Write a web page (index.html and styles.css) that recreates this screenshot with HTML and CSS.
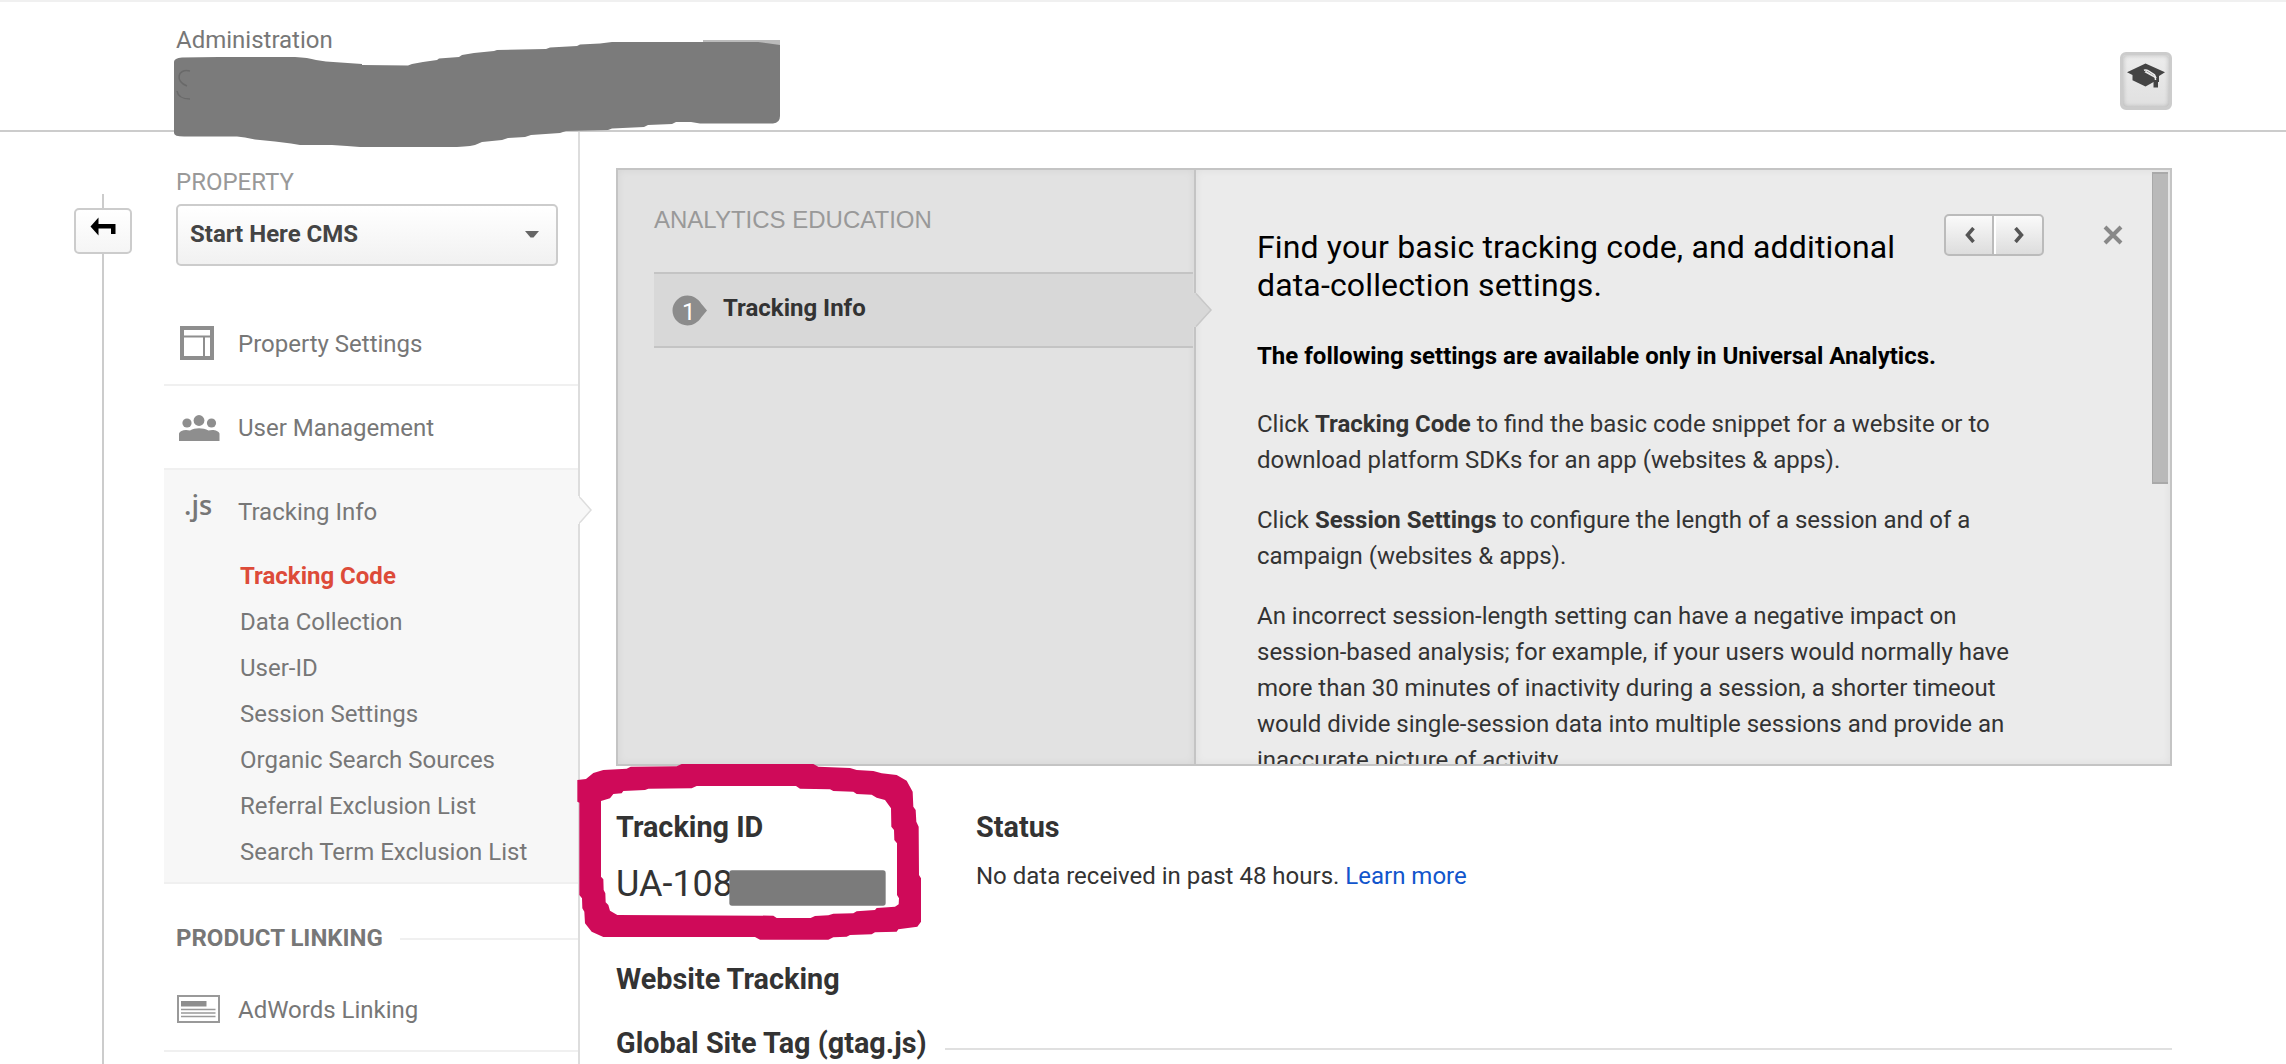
FILE: index.html
```html
<!DOCTYPE html>
<html lang="en">
<head>
<meta charset="utf-8">
<title>Administration</title>
<link rel="stylesheet" href="styles.css">
</head>
<body>
<header class="header">
  <div class="crumb">Administration</div>
  <button class="edu-button" aria-label="Education">
    <svg width="40" height="28" viewBox="0 0 40 28"><path d="M1 10.300 19.500 1.500 39 10.300 33 14V20H30.500V15L20 8.800l-1.500 1.500 10 5.500V19.500L19.500 24.500 6.500 18.200V13Z" fill="#444"/><path d="M27.500 16v9.500h4.500V16" fill="#444"/><path d="M18 8.300c1.700-.8 3-.3 4 .4l6.500 4.200c1 1 1 2 1 5" fill="none" stroke="#eee" stroke-width="1.500"/></svg>
  </button>
</header>

<div class="body">
  <div class="rail">
    <div class="rail-line rail-top"></div>
    <button class="back" aria-label="Back"><svg width="28" height="20" viewBox="0 0 28 20"><path d="M1.500 9.500 9.500 .5V7H26.500V17H22V11.500H9.500V18.500Z" fill="#000"/></svg></button>
    <div class="rail-line rail-rest"></div>
  </div>

  <nav class="sidebar">
    <div class="property">
      <div class="property-label">PROPERTY</div>
      <div class="select"><span>Start Here CMS</span><svg width="14" height="7" viewBox="0 0 14 7"><path d="M0 0H14L8.500 6.500H5.500Z" fill="#666"/></svg></div>
    </div>
    <a class="nav-item">
      <span class="nav-icon"><svg width="34" height="34" viewBox="0 0 34 34" fill="none" stroke="#8e8e8e"><rect x="2" y="2" width="30" height="30" stroke-width="4"/><path d="M3 10.500H31M24 11V31" stroke-width="2"/></svg></span>
      <span>Property Settings</span>
    </a>
    <a class="nav-item">
      <span class="nav-icon users"><svg width="41" height="26" viewBox="0 0 41 26" fill="#8e8e8e"><circle cx="20" cy="5.500" r="5.400"/><circle cx="8" cy="8" r="4.600"/><circle cx="32.500" cy="8" r="4.600"/><path d="M0 26V18.500C1 15.500 6 14 11 15.500 16 12.500 24 12.500 29.500 15.500 34 14 39.500 15.500 40.500 18.500V26Z"/></svg></span>
      <span>User Management</span>
    </a>
    <div class="group">
      <a class="nav-item flush">
        <span class="nav-icon js">.js</span>
        <span>Tracking Info</span>
      </a>
      <svg class="group-arrow" width="16" height="28" viewBox="0 0 16 28"><path d="M0 0H2V1.500L14 14 2 26.500V28H0Z" fill="#f7f7f7"/><path d="M3 1.500 14 14 3 26.500" fill="none" stroke="#ddd" stroke-width="1.500"/></svg>
      <ul class="subnav">
        <li class="active">Tracking Code</li>
        <li>Data Collection</li>
        <li>User-ID</li>
        <li>Session Settings</li>
        <li>Organic Search Sources</li>
        <li>Referral Exclusion List</li>
        <li>Search Term Exclusion List</li>
      </ul>
    </div>
    <div class="section">PRODUCT LINKING</div>
    <a class="nav-item linking">
      <span class="nav-icon ad"><svg width="43" height="28" viewBox="0 0 43 28"><rect x="1" y="1" width="41" height="26" fill="#fff" stroke="#999" stroke-width="2"/><path d="M4 6H29.500V11.500H4Z" fill="#8e8e8e"/><path d="M4 14.500H38.500M4 18H38.500M4 21.500H38.500" stroke="#999" stroke-width="1.700"/></svg></span>
      <span>AdWords Linking</span>
    </a>
  </nav>

  <main class="main">
    <section class="edu">
      <div class="edu-left">
        <div class="edu-title">ANALYTICS EDUCATION</div>
        <div class="edu-item">
          <span class="badge"><svg width="36" height="31" viewBox="0 0 36 31"><path d="M15.500 .5C21 .5 26 3.500 29.500 9L35 15.500 29.500 22C26 27.500 21 30.500 15.500 30.500A15 15 0 0 1 15.500 .5Z" fill="#8c8c8c"/></svg><b>1</b></span>
          <span>Tracking Info</span>
        </div>
        <svg class="edu-arrow" width="20" height="34" viewBox="0 0 20 34"><path d="M0 0H3L18 17 3 34H0Z" fill="#d8d8d8"/><path d="M3 .5 18 17 3 33.500" fill="none" stroke="#c8c8c8" stroke-width="1.500"/></svg>
      </div>
      <div class="edu-right">
        <article class="edu-text">
          <h2>Find your basic tracking code, and additional data-collection settings.</h2>
          <h3>The following settings are available only in Universal Analytics.</h3>
          <p>Click <b>Tracking Code</b> to find the basic code snippet for a website or to<br>download platform SDKs for an app (websites &amp; apps).</p>
          <p>Click <b>Session Settings</b> to configure the length of a session and of a<br>campaign (websites &amp; apps).</p>
          <p>An incorrect session-length setting can have a negative impact on<br>session-based analysis; for example, if your users would normally have<br>more than 30 minutes of inactivity during a session, a shorter timeout<br>would divide single-session data into multiple sessions and provide an<br>inaccurate picture of activity.</p>
        </article>
        <div class="pager">
          <button aria-label="Previous"><svg width="10" height="16" viewBox="0 0 10 16"><path d="M8.500 1 2.500 8 8.500 15" fill="none" stroke="#555" stroke-width="3.500"/></svg></button>
          <button aria-label="Next"><svg width="10" height="16" viewBox="0 0 10 16"><path d="M1.500 1 7.500 8 1.500 15" fill="none" stroke="#555" stroke-width="3.500"/></svg></button>
        </div>
        <svg class="close" width="20" height="20" viewBox="0 0 20 20"><path d="M2 2 18 18M18 2 2 18" stroke="#888" stroke-width="4"/></svg>
        <div class="scroll"><div class="thumb"></div></div>
      </div>
    </section>

    <div class="info">
      <div class="tracking">
        <h4>Tracking ID</h4>
        <div class="tid">UA-108</div>
      </div>
      <div class="status">
        <h4>Status</h4>
        <div class="status-text">No data received in past 48 hours. <a>Learn more</a></div>
      </div>
    </div>
    <h4 class="website">Website Tracking</h4>
    <h4 class="gtag">Global Site Tag (gtag.js)</h4>
  </main>
</div>

<!-- redaction over the account name -->
<svg class="redact" width="620" height="120" viewBox="170 35 620 120">
  <path d="M703 43V40H780V46" fill="#bbb"/>
  <path d="M174 62Q174 58 182 57.500L219 57H295Q308 57.500 316 60L326 61.500 362 64V65L408 65.500 412 64 423 62 437 60 439 58.500 459 57 462 55 474 53 494 51 497 50 546 49 550 47.500 577 46 580 44.500 600 43.500 612 42H758L780 45V116Q780 123 773 123.500H700L691 122H676L672 124 648 125 644 127 612 128.500 608 130 566 131 560 133 531 135 525 137 508 138 502 140 482 142 475 145Q466 147 449 147H360L347 146 332 145H300L291 143.500 275 141.500 255 139.500 245 137.500 237 136.500H184Q174 136.500 174 133Z" fill="#7b7b7b"/>
  <path d="M190 71C177 68 175 82 187 86M177 91C178 97 184 99 190 99" fill="none" stroke="#696969" stroke-width="1.500"/>
</svg>

<!-- highlight drawn round the tracking id -->
<svg class="mark" width="400" height="324" viewBox="0 0 1200 972">
  <rect x="508" y="391" width="469" height="106" rx="8" fill="#7b7b7b"/>
  <path fill="#cf0a59" fill-rule="evenodd" d="M52 120 78 117 100 99 130 90 200 86 212 80 350 79 365 72H760L775 80 870 84 890 90 940 93 965 100 1010 105 1040 122 1058 155 1060 200 1067 210 1069 245 1076 260 1077 405 1083 415V545L1072 560 1015 568 1010 575 945 577 935 583 870 585 860 590 820 592 805 599H600L585 591H130L95 575 75 550 73 515 67 505 66 475 58 465V188L52 185Z M123 183 150 175 160 162 185 160 190 153 255 150 265 146 395 145 410 138H708L720 146 810 148 820 153 880 155 890 162 935 164 950 173 975 180 993 205 994 260 1002 270 1003 300 1011 310V465L1017 475 1016 493 1005 500 950 504 945 510 890 514 880 520 820 521 805 526 765 528 752 534H650L640 527 172 525 150 512 145 495 137 487 136 460 131 450 130 418 123 410Z"/>
</svg>
</body>
</html>
```
FILE: styles.css
```css
* { box-sizing: border-box; }

body {
  margin: 0;
  width: 2286px;
  height: 1064px;
  overflow: hidden;
  position: relative;
  background: #fff;
  color: #333;
  font: 24px/36px Roboto, "Liberation Sans", sans-serif;
}

button { padding: 0; font: inherit; }
svg { display: block; }
h2, h3, h4, p, ul { margin: 0; padding: 0; }
ul { list-style: none; }

.header {
  height: 132px;
  padding: 20px 114px 0 176px;
  border-top: 2px solid #f0f0f0;
  border-bottom: 2px solid #ccc;
  display: flex;
  justify-content: space-between;
}
.crumb { color: #777; }
.edu-button {
  width: 52px;
  height: 58px;
  margin-top: 30px;
  border: 3px solid #ccc;
  border-radius: 6px;
  background: linear-gradient(#ececec, #e0e0e0);
  box-shadow: inset 0 0 5px rgba(0, 0, 0, .22);
  padding: 7px 3px;
  display: flex;
  align-items: flex-start;
}

.body { display: flex; height: 932px; }

.rail {
  width: 164px;
  padding: 62px 32px 0 74px;
  display: flex;
  flex-direction: column;
}
.rail-line { width: 2px; margin-left: 28px; background: #ccc; }
.rail-top { height: 14px; }
.rail-rest { flex: 1; }
.back {
  height: 46px;
  width: 58px;
  border: 2px solid #ccc;
  border-radius: 5px;
  background: linear-gradient(#fff, #f5f5f5);
  padding: 7px 0 0 13px;
  display: flex;
  align-items: flex-start;
}

.sidebar {
  width: 416px;
  border-right: 2px solid #ddd;
  color: #777;
}
.property { height: 168px; padding: 32px 20px 0 12px; }
.property-label { color: #999; height: 40px; }
.select {
  height: 62px;
  border: 2px solid #ccc;
  border-radius: 5px;
  background: linear-gradient(#fff, #f1f1f1);
  padding: 0 17px 2px 12px;
  display: flex;
  align-items: center;
  justify-content: space-between;
  font-weight: 700;
  color: #444;
}
.nav-item {
  height: 86px;
  border-bottom: 2px solid #f0f0f0;
  display: flex;
  padding: 26px 0 0 14px;
}
.nav-item + .nav-item { height: 84px; }
.nav-item + .nav-item, .nav-item.flush { padding-top: 24px; }
.nav-icon { flex: none; width: 60px; padding: 0 0 0 2px; }
.users { padding: 5px 0 0 1px; }
.group {
  position: relative;
  height: 414px;
  background: #f7f7f7;
  border-bottom: 2px solid #f0f0f0;
}
.nav-item.flush { height: 76px; border: 0; }
.js { font: 600 27px/36px "Open Sans", sans-serif; padding-left: 6px; margin-top: -7px; height: 36px; }
.group-arrow { position: absolute; left: 413px; top: 26px; }
.subnav { padding: 7px 0 0 76px; line-height: 46px; }
.subnav .active { color: #dd4b39; font-weight: 700; }
.section {
  display: flex;
  align-items: center;
  gap: 17px;
  height: 36px;
  margin: 36px 0 0 12px;
  font-weight: 700;
}
.section::after { content: ""; flex: 1; height: 2px; background: #f0f0f0; margin-top: 2px; }
.nav-item.linking { height: 96px; padding-top: 36px; }
.ad { padding: 3px 0 0 0; margin-left: -1px; width: 61px; }

.main { flex: 1; padding: 36px 114px 0 36px; }
.edu {
  height: 598px;
  border: 2px solid #c4c4c4;
  display: flex;
}
.edu-left {
  position: relative;
  width: 578px;
  background: #e2e2e2;
  border-right: 2px solid #c4c4c4;
  padding: 32px 1px 0 36px;
  box-shadow: inset 0 0 8px rgba(0, 0, 0, .06);
}
.edu-title { font-family: "Liberation Sans", Arial, sans-serif; color: #999; height: 70px; }
.edu-item {
  height: 76px;
  background: #d8d8d8;
  border: solid #c4c4c4;
  border-width: 2px 0;
  padding: 16px 0 0 18px;
  display: flex;
  font-weight: 700;
}
.badge { position: relative; width: 51px; padding-top: 5px; }
.badge b { position: absolute; left: 10px; top: 4px; color: #fff; font-weight: 400; }
.edu-arrow { position: absolute; left: 575px; top: 123px; }
.edu-right {
  flex: 1;
  display: flex;
  overflow: hidden;
  background: #ebebeb;
  box-shadow: inset 0 0 8px rgba(0, 0, 0, .06);
}
.edu-text { width: 686px; flex: none; padding: 58px 0 0 61px; margin-right: 62px; white-space: nowrap; }
.edu-text h2 { font: 400 32px/38px Roboto, sans-serif; letter-spacing: .15px; color: #000; width: 660px; white-space: normal; }
.edu-text h3 { font-size: 24px; line-height: 36px; color: #000; margin: 34px 0 32px; }
.edu-text p { margin-bottom: 24px; }
.pager {
  width: 100px;
  height: 42px;
  margin-top: 44px;
  border: 2px solid #bbb;
  border-radius: 5px;
  background: linear-gradient(#fafafa, #ddd);
  display: flex;
}
.pager button {
  width: 46px;
  border: 0;
  background: none;
  display: flex;
  align-items: center;
  justify-content: center;
  padding-left: 2px;
}
.pager button + button { width: 50px; border-left: 2px solid #bbb; box-shadow: inset 2px 0 #fff; }
.close { margin: 55px 0 0 59px; }
.scroll { flex: 1; display: flex; justify-content: flex-end; padding: 2px 2px 0 0; }
.thumb { width: 16px; height: 312px; background: #b9b9b9; border: solid #a9a9a9; border-width: 2px 0 2px 1px; }

.info { display: flex; height: 194px; padding-top: 42px; }
.tracking { width: 360px; }
h4 { font-size: 28.8px; line-height: 38px; }
.tid { font-size: 36px; line-height: 44px; margin-top: 16px; }
.status-text { margin-top: 12px; }
.status-text a { color: #15c; }
.website { height: 64px; }
.gtag { display: flex; align-items: center; gap: 18px; }
.gtag::after { content: ""; flex: 1; height: 2px; background: #e0e0e0; margin-top: 12px; }

.redact { position: absolute; left: 170px; top: 35px; }
.mark { position: absolute; left: 560px; top: 740px; }
```
